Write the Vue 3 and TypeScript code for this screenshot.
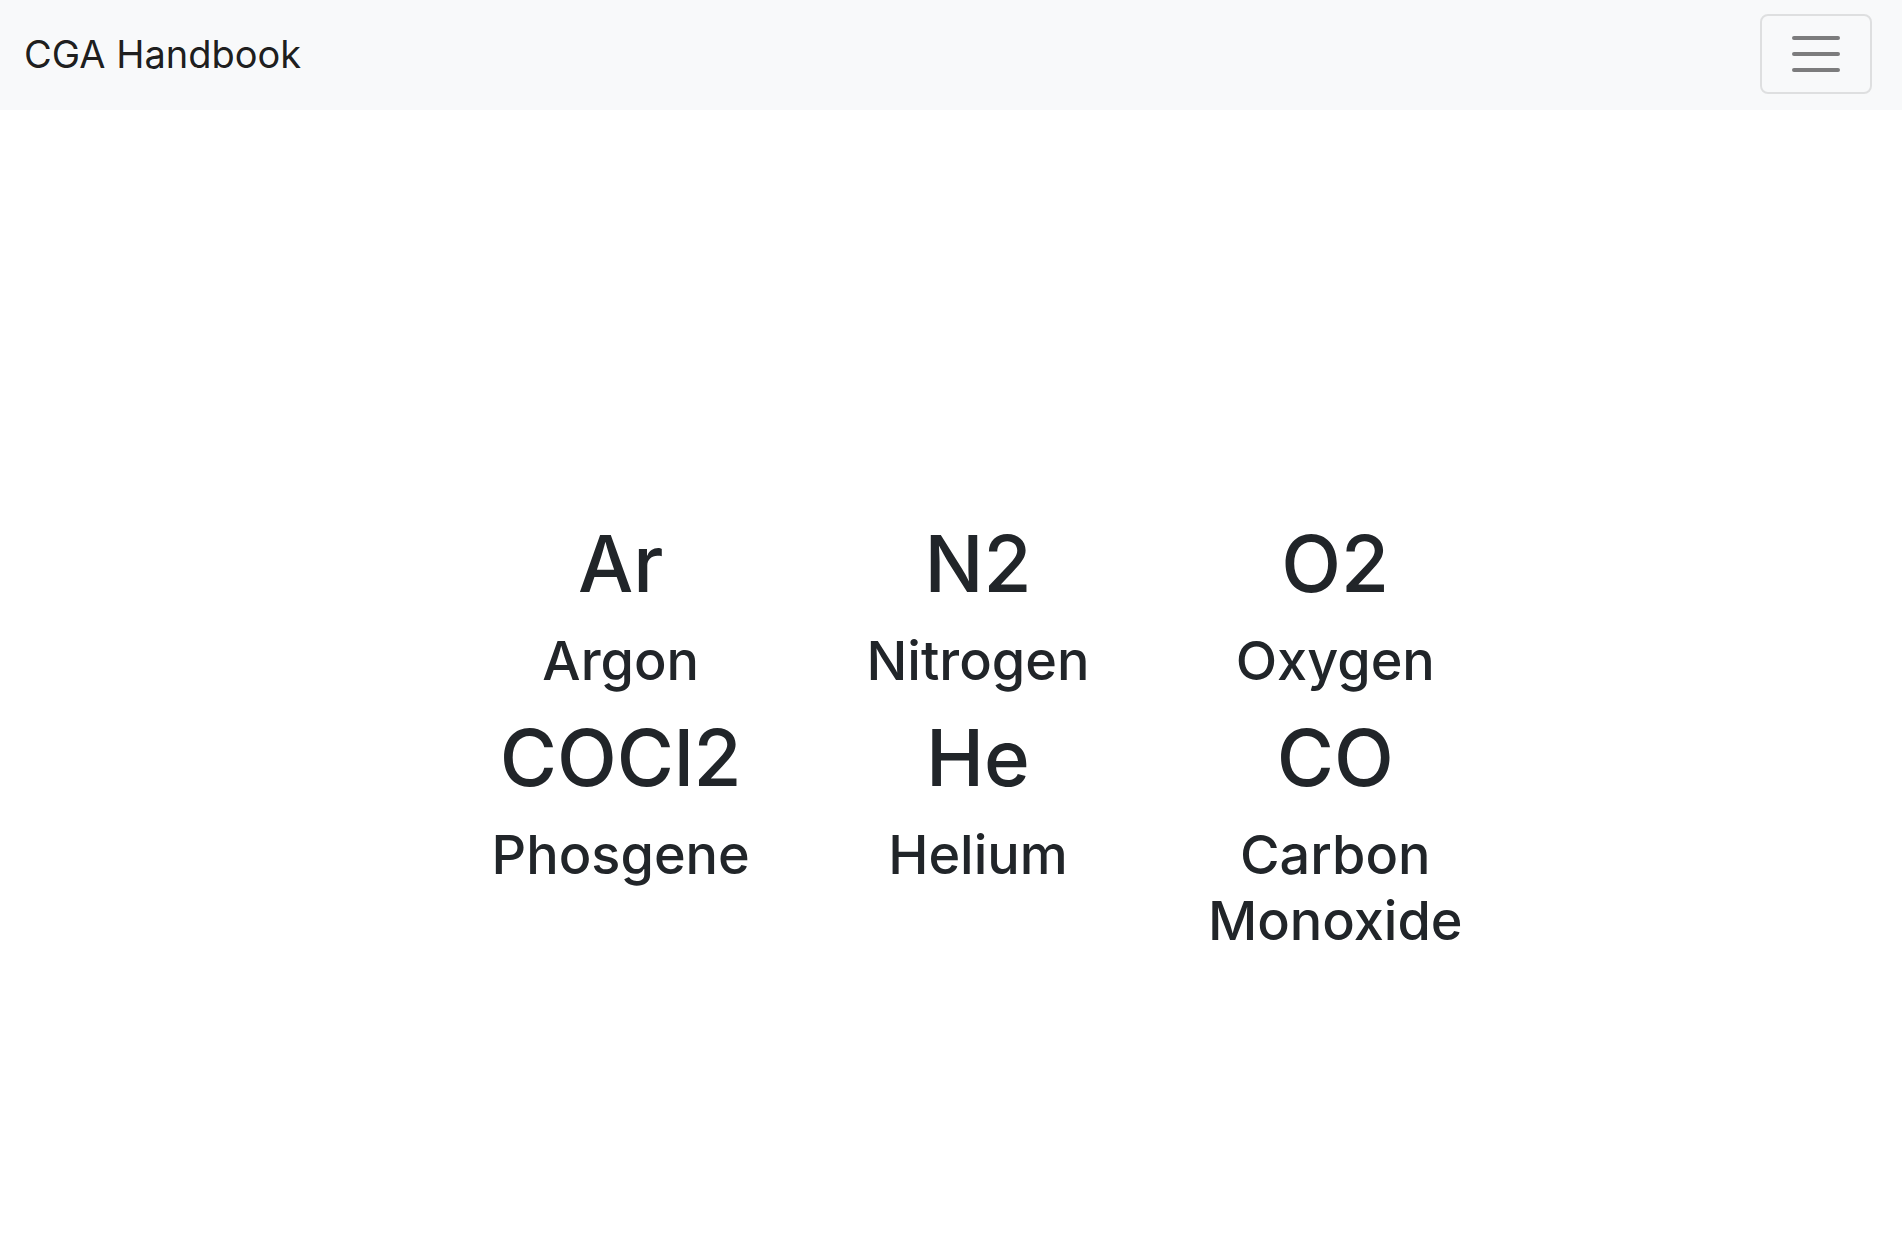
<script setup lang="ts">
import { ref } from 'vue'

interface Gas {
  formula: string
  name: string
}

const gases: Gas[] = [
  { formula: 'Ar', name: 'Argon' },
  { formula: 'N2', name: 'Nitrogen' },
  { formula: 'O2', name: 'Oxygen' },
  { formula: 'COCl2', name: 'Phosgene' },
  { formula: 'He', name: 'Helium' },
  { formula: 'CO', name: 'Carbon Monoxide' },
]

const expanded = ref(false)
</script>

<template>
  <div class="page">
    <nav class="navbar">
      <a class="brand" href="#">CGA Handbook</a>
      <button
        class="toggler"
        type="button"
        aria-label="Toggle navigation"
        :aria-expanded="expanded"
        @click="expanded = !expanded"
      >
        <svg viewBox="0 0 30 30" aria-hidden="true">
          <path
            d="M4 7h22M4 15h22M4 23h22"
            fill="none"
            stroke="#000"
            stroke-opacity="0.5"
            stroke-width="2"
            stroke-linecap="round"
            stroke-miterlimit="10"
          />
        </svg>
      </button>
    </nav>
    <main class="content">
      <div class="grid">
        <section v-for="gas in gases" :key="gas.formula" class="gas">
          <h1>{{ gas.formula }}</h1>
          <h3>{{ gas.name }}</h3>
        </section>
      </div>
    </main>
  </div>
</template>

<style>
body {
  background: #fff;
}
</style>

<style scoped>
.page {
  display: flex;
  flex-direction: column;
  min-height: 100vh;
  font-family: Inter, 'Liberation Sans', sans-serif;
  color: #212529;
}

.navbar {
  display: flex;
  align-items: center;
  justify-content: space-between;
  padding: 14px 30px 16px 24px;
  background: #f8f9fa;
}

.brand {
  color: rgba(0, 0, 0, 0.9);
  font-size: 38px;
  line-height: 60px;
  text-decoration: none;
}

.toggler {
  display: flex;
  padding: 8px 24px;
  border: 2px solid rgba(0, 0, 0, 0.1);
  border-radius: 8px;
  background: transparent;
}

.toggler svg {
  width: 60px;
  height: 60px;
}

.content {
  display: flex;
  flex: 1;
  align-items: center;
  justify-content: center;
  padding: 120px 0 0 54px;
}

.grid {
  display: grid;
  grid-template-columns: repeat(3, 1fr);
  width: 58%;
}

.gas {
  padding: 0 30px;
  text-align: center;
}

h1,
h3 {
  margin: 0 0 16px;
  font-weight: 500;
}

h1 {
  font-size: 78px;
  line-height: 96px;
}

h3 {
  font-size: 54px;
  line-height: 66px;
}
</style>
